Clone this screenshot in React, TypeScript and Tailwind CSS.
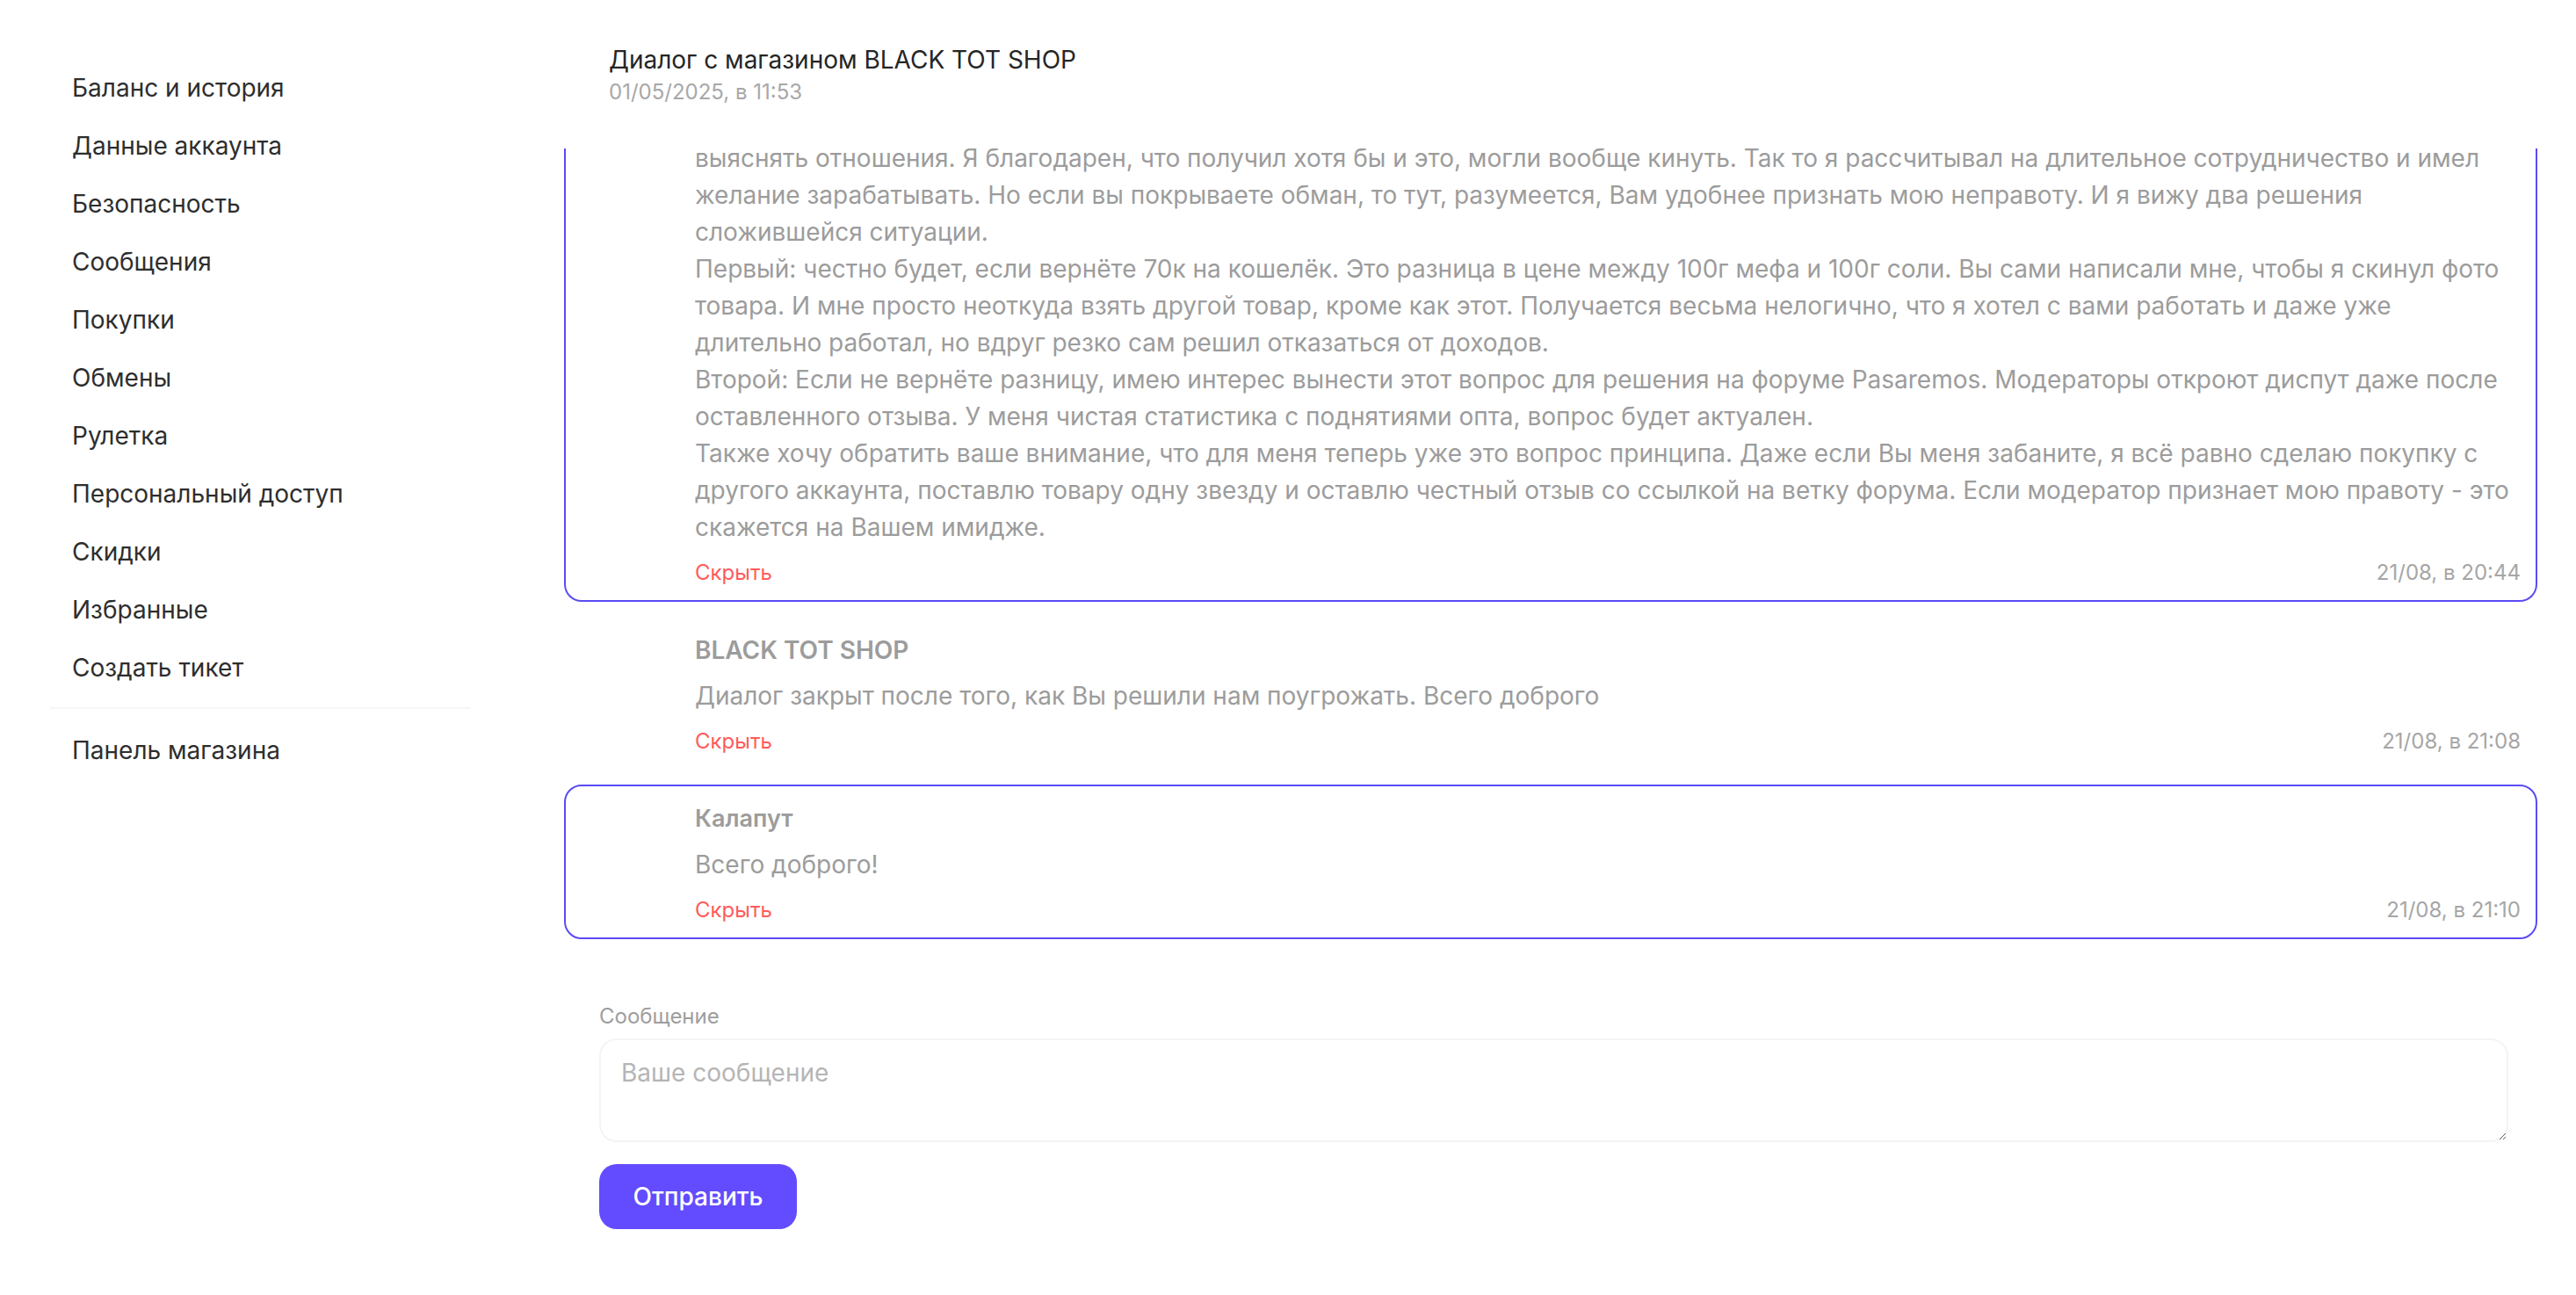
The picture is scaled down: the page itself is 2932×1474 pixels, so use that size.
import React from "react";

const sidebarItems = [
  "Баланс и история",
  "Данные аккаунта",
  "Безопасность",
  "Сообщения",
  "Покупки",
  "Обмены",
  "Рулетка",
  "Персональный доступ",
  "Скидки",
  "Избранные",
  "Создать тикет",
];

const longLines = [
  "выяснять отношения. Я благодарен, что получил хотя бы и это, могли вообще кинуть. Так то я рассчитывал на длительное сотрудничество и имел",
  "желание зарабатывать. Но если вы покрываете обман, то тут, разумеется, Вам удобнее признать мою неправоту. И я вижу два решения",
  "сложившейся ситуации.",
  "Первый: честно будет, если вернёте 70к на кошелёк. Это разница в цене между 100г мефа и 100г соли. Вы сами написали мне, чтобы я скинул фото",
  "товара. И мне просто неоткуда взять другой товар, кроме как этот. Получается весьма нелогично, что я хотел с вами работать и даже уже",
  "длительно работал, но вдруг резко сам решил отказаться от доходов.",
  "Второй: Если не вернёте разницу, имею интерес вынести этот вопрос для решения на форуме Pasaremos. Модераторы откроют диспут даже после",
  "оставленного отзыва. У меня чистая статистика с поднятиями опта, вопрос будет актуален.",
  "Также хочу обратить ваше внимание, что для меня теперь уже это вопрос принципа. Даже если Вы меня забаните, я всё равно сделаю покупку с",
  "другого аккаунта, поставлю товару одну звезду и оставлю честный отзыв со ссылкой на ветку форума. Если модератор признает мою правоту - это",
  "скажется на Вашем имидже.",
];

function Footer({ time }: { time: string }) {
  return (
    <div className="mt-[14px] flex items-center justify-between text-[24px] leading-[34px]">
      <button className="text-[#ff5b5b]">Скрыть</button>
      <span className="text-[#a6a6a6]">{time}</span>
    </div>
  );
}

export default function App() {
  return (
    <div
      className="flex h-[1474px] w-full bg-white"
      style={{ fontFamily: "Inter, 'Noto Sans', sans-serif" }}
    >
      {/* Sidebar */}
      <aside className="w-[642px] shrink-0 pt-[67px]">
        <nav className="ml-[57px] w-[479px]">
          {sidebarItems.map((item) => (
            <div
              key={item}
              className="flex h-[66px] items-center pl-[25px] text-[28px] text-[#2e2e2e]"
            >
              {item}
            </div>
          ))}
          <div className="mt-[12px] mb-[14px] h-[2px] bg-[#f6f6f6]" />
          <div className="flex h-[66px] items-center pl-[25px] text-[28px] text-[#2e2e2e]">
            Панель магазина
          </div>
        </nav>
      </aside>

      {/* Main */}
      <main className="flex min-w-0 flex-1 flex-col pr-[44px]">
        <header className="pl-[51px] pt-[49px]">
          <div className="text-[28px] leading-[38px] text-[#262626]">
            Диалог с магазином BLACK TOT SHOP
          </div>
          <div className="mt-[3px] text-[24px] leading-[30px] text-[#a8a8a8]">
            01/05/2025, в 11:53
          </div>
        </header>

        <section className="mt-[49px] h-[900px] overflow-hidden">
          <div className="-mt-[10px] flex flex-col gap-[16px]">
            {/* Card 1 (own, scrolled) */}
            <div className="rounded-b-[20px] border-2 border-t-0 border-[#5b4bf5] pb-[14px] pl-[147px] pr-[17px]">
              <div className="text-[28px] leading-[42px] text-[#9c9c9c]">
                {longLines.map((l, i) => (
                  <div key={i} className="whitespace-nowrap">
                    {l}
                  </div>
                ))}
              </div>
              <Footer time="21/08, в 20:44" />
            </div>

            {/* Card 2 (shop) */}
            <div className="rounded-[20px] border-2 border-transparent pb-[14px] pl-[147px] pr-[17px] pt-[17px]">
              <div className="mb-[11px] text-[28px] font-semibold leading-[40px] text-[#9c9c9c]">
                BLACK TOT SHOP
              </div>
              <div className="text-[28px] leading-[42px] text-[#9c9c9c]">
                Диалог закрыт после того, как Вы решили нам поугрожать. Всего доброго
              </div>
              <Footer time="21/08, в 21:08" />
            </div>

            {/* Card 3 (own) */}
            <div className="rounded-[20px] border-2 border-[#5b4bf5] pb-[14px] pl-[147px] pr-[17px] pt-[17px]">
              <div className="mb-[11px] text-[27px] font-semibold leading-[40px] text-[#9c9c9c]">
                Калапут
              </div>
              <div className="text-[28px] leading-[42px] text-[#9c9c9c]">
                Всего доброго!
              </div>
              <Footer time="21/08, в 21:10" />
            </div>
          </div>
        </section>

        <form className="mt-[71px] pl-[40px] pr-[33px]" onSubmit={(e) => e.preventDefault()}>
          <label className="block text-[24px] leading-[34px] text-[#9e9e9e]">
            Сообщение
          </label>
          <textarea
            placeholder="Ваше сообщение"
            className="mt-[8px] block h-[118px] w-full rounded-[20px] border-2 border-[#f4f4f4] bg-white px-[23px] pt-[19px] text-[28px] leading-[36px] text-[#333] outline-none placeholder:text-[#b5b5b5]"
          />
          <button
            type="submit"
            className="mt-[25px] h-[74px] w-[225px] rounded-[20px] bg-[#634cff] text-[28px] font-medium text-white"
          >
            Отправить
          </button>
        </form>
      </main>
    </div>
  );
}
